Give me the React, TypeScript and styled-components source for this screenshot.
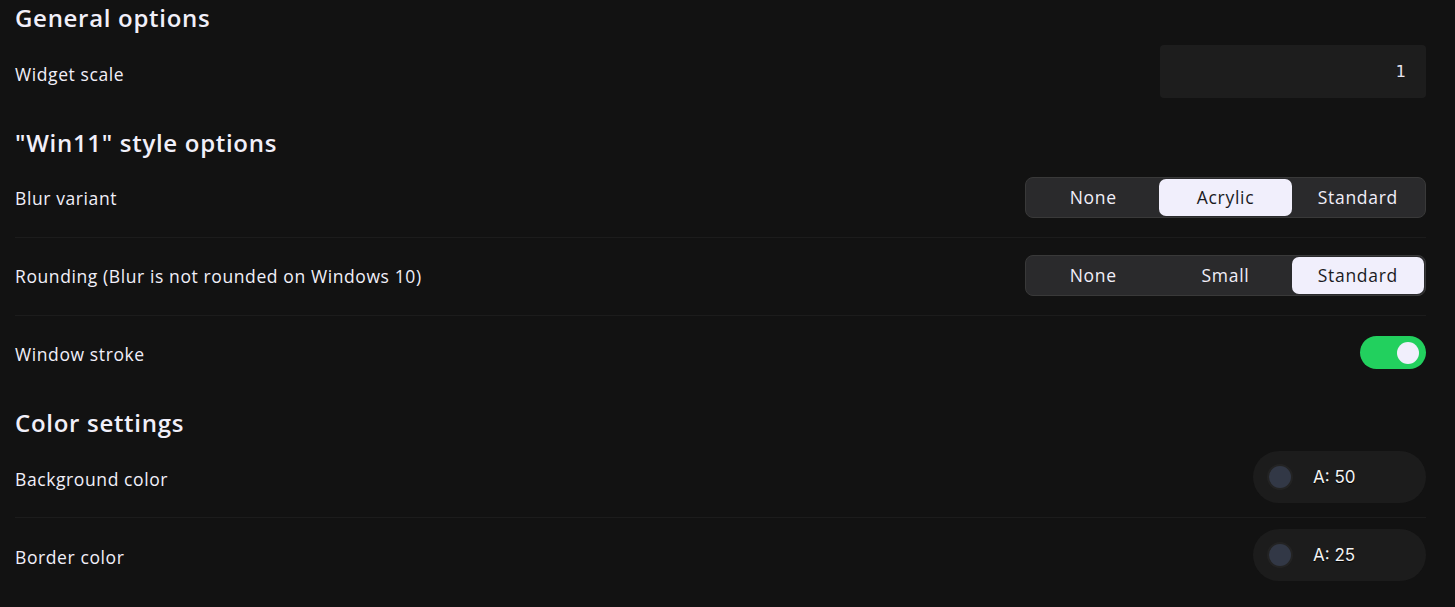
import React, { useState } from "react";
import styled, { createGlobalStyle } from "styled-components";

const GlobalStyle = createGlobalStyle`
  html, body {
    margin: 0;
    padding: 0;
    background: #121212;
  }
  * {
    box-sizing: border-box;
  }
`;

type Option = { label: string; value: string };

const blurOptions: Option[] = [
  { label: "None", value: "none" },
  { label: "Acrylic", value: "acrylic" },
  { label: "Standard", value: "standard" },
];

const roundingOptions: Option[] = [
  { label: "None", value: "none" },
  { label: "Small", value: "small" },
  { label: "Standard", value: "standard" },
];

interface SegmentedProps {
  options: Option[];
  value: string;
  onChange: (v: string) => void;
}

const Segmented: React.FC<SegmentedProps> = ({ options, value, onChange }) => (
  <SegmentGroup>
    {options.map((o) => (
      <Segment key={o.value} $active={o.value === value} onClick={() => onChange(o.value)}>
        {o.label}
      </Segment>
    ))}
  </SegmentGroup>
);

const ColorField: React.FC<{ swatch: string; alpha: number }> = ({ swatch, alpha }) => (
  <ColorPill>
    <Swatch $color={swatch} />
    <AlphaText>A: {alpha}</AlphaText>
  </ColorPill>
);

const App: React.FC = () => {
  const [blur, setBlur] = useState("acrylic");
  const [rounding, setRounding] = useState("standard");
  const [stroke, setStroke] = useState(true);

  return (
    <>
      <GlobalStyle />
      <Page>
        <SectionTitle $first>General options</SectionTitle>
        <Row>
          <Label>Widget scale</Label>
          <NumberInput defaultValue="1" />
        </Row>

        <SectionTitle>"Win11" style options</SectionTitle>
        <Row $divider>
          <Label>Blur variant</Label>
          <Segmented options={blurOptions} value={blur} onChange={setBlur} />
        </Row>
        <Row $divider>
          <Label>Rounding (Blur is not rounded on Windows 10)</Label>
          <Segmented options={roundingOptions} value={rounding} onChange={setRounding} />
        </Row>
        <Row>
          <Label>Window stroke</Label>
          <Toggle $on={stroke} onClick={() => setStroke(!stroke)}>
            <Knob $on={stroke} />
          </Toggle>
        </Row>

        <SectionTitle>Color settings</SectionTitle>
        <Row $divider>
          <Label>Background color</Label>
          <ColorField swatch="#323846" alpha={50} />
        </Row>
        <Row>
          <Label>Border color</Label>
          <ColorField swatch="#323846" alpha={25} />
        </Row>
      </Page>
    </>
  );
};

export default App;

const Page = styled.div`
  display: flex;
  flex-direction: column;
  padding: 1px 29px 0 15px;
  font-family: "Open Sans", "Liberation Sans", sans-serif;
  color: #f1eff9;
`;

const SectionTitle = styled.h2<{ $first?: boolean }>`
  margin: ${(p) => (p.$first ? "0" : "13.5px")} 0 0;
  height: 34px;
  line-height: 34px;
  font-size: 24px;
  font-weight: 600;
  letter-spacing: 0.7px;
  color: #f1eff9;
`;

const Row = styled.div<{ $divider?: boolean }>`
  display: flex;
  align-items: center;
  justify-content: space-between;
  height: 77px;
  box-sizing: content-box;
  border-bottom: ${(p) => (p.$divider ? "1px solid #1c1c1c" : "none")};
`;

const Label = styled.span`
  font-size: 17.5px;
  font-weight: 400;
  letter-spacing: 0.6px;
  color: #f1eff9;
`;

const NumberInput = styled.input`
  width: 266px;
  height: 53px;
  margin-bottom: 5px;
  padding: 0 20px;
  border: none;
  border-radius: 4px;
  background: #1d1d1d;
  color: #e6e4f0;
  font-family: "DejaVu Sans", sans-serif;
  font-size: 16px;
  text-align: right;
  outline: none;
`;

const SegmentGroup = styled.div`
  display: grid;
  grid-template-columns: repeat(3, 1fr);
  width: 401px;
  height: 41px;
  margin-bottom: 2px;
  padding: 1px;
  border: 1px solid #393939;
  border-radius: 8px;
  background: #2a2a2c;
`;

const Segment = styled.button<{ $active: boolean }>`
  border: none;
  border-radius: 7px;
  background: ${(p) => (p.$active ? "#f1effc" : "transparent")};
  color: ${(p) => (p.$active ? "#1b1b1f" : "#f1eff9")};
  font-family: "Open Sans", "Liberation Sans", sans-serif;
  font-size: 17.5px;
  letter-spacing: 0.7px;
  cursor: pointer;
`;

const Toggle = styled.div<{ $on: boolean }>`
  position: relative;
  width: 66px;
  height: 33px;
  margin-bottom: 3px;
  border-radius: 17px;
  background: ${(p) => (p.$on ? "#22d05e" : "#3a3a3a")};
  cursor: pointer;
`;

const Knob = styled.span<{ $on: boolean }>`
  position: absolute;
  top: 5.5px;
  left: ${(p) => (p.$on ? "37px" : "7px")};
  width: 22px;
  height: 22px;
  border-radius: 50%;
  background: #f1effc;
`;

const ColorPill = styled.div`
  display: flex;
  align-items: center;
  gap: 20px;
  width: 173px;
  height: 52px;
  margin-bottom: 3px;
  padding: 0 14px;
  border-radius: 26px;
  background: #1c1c1c;
`;

const Swatch = styled.span<{ $color: string }>`
  width: 26px;
  height: 26px;
  border-radius: 50%;
  background: ${(p) => p.$color};
  border: 2px solid #232323;
`;

const AlphaText = styled.span`
  font-family: Inter, "Liberation Sans", sans-serif;
  font-size: 17px;
  color: #f3f3f3;
  text-shadow: 0 1px 1px #000;
`;
